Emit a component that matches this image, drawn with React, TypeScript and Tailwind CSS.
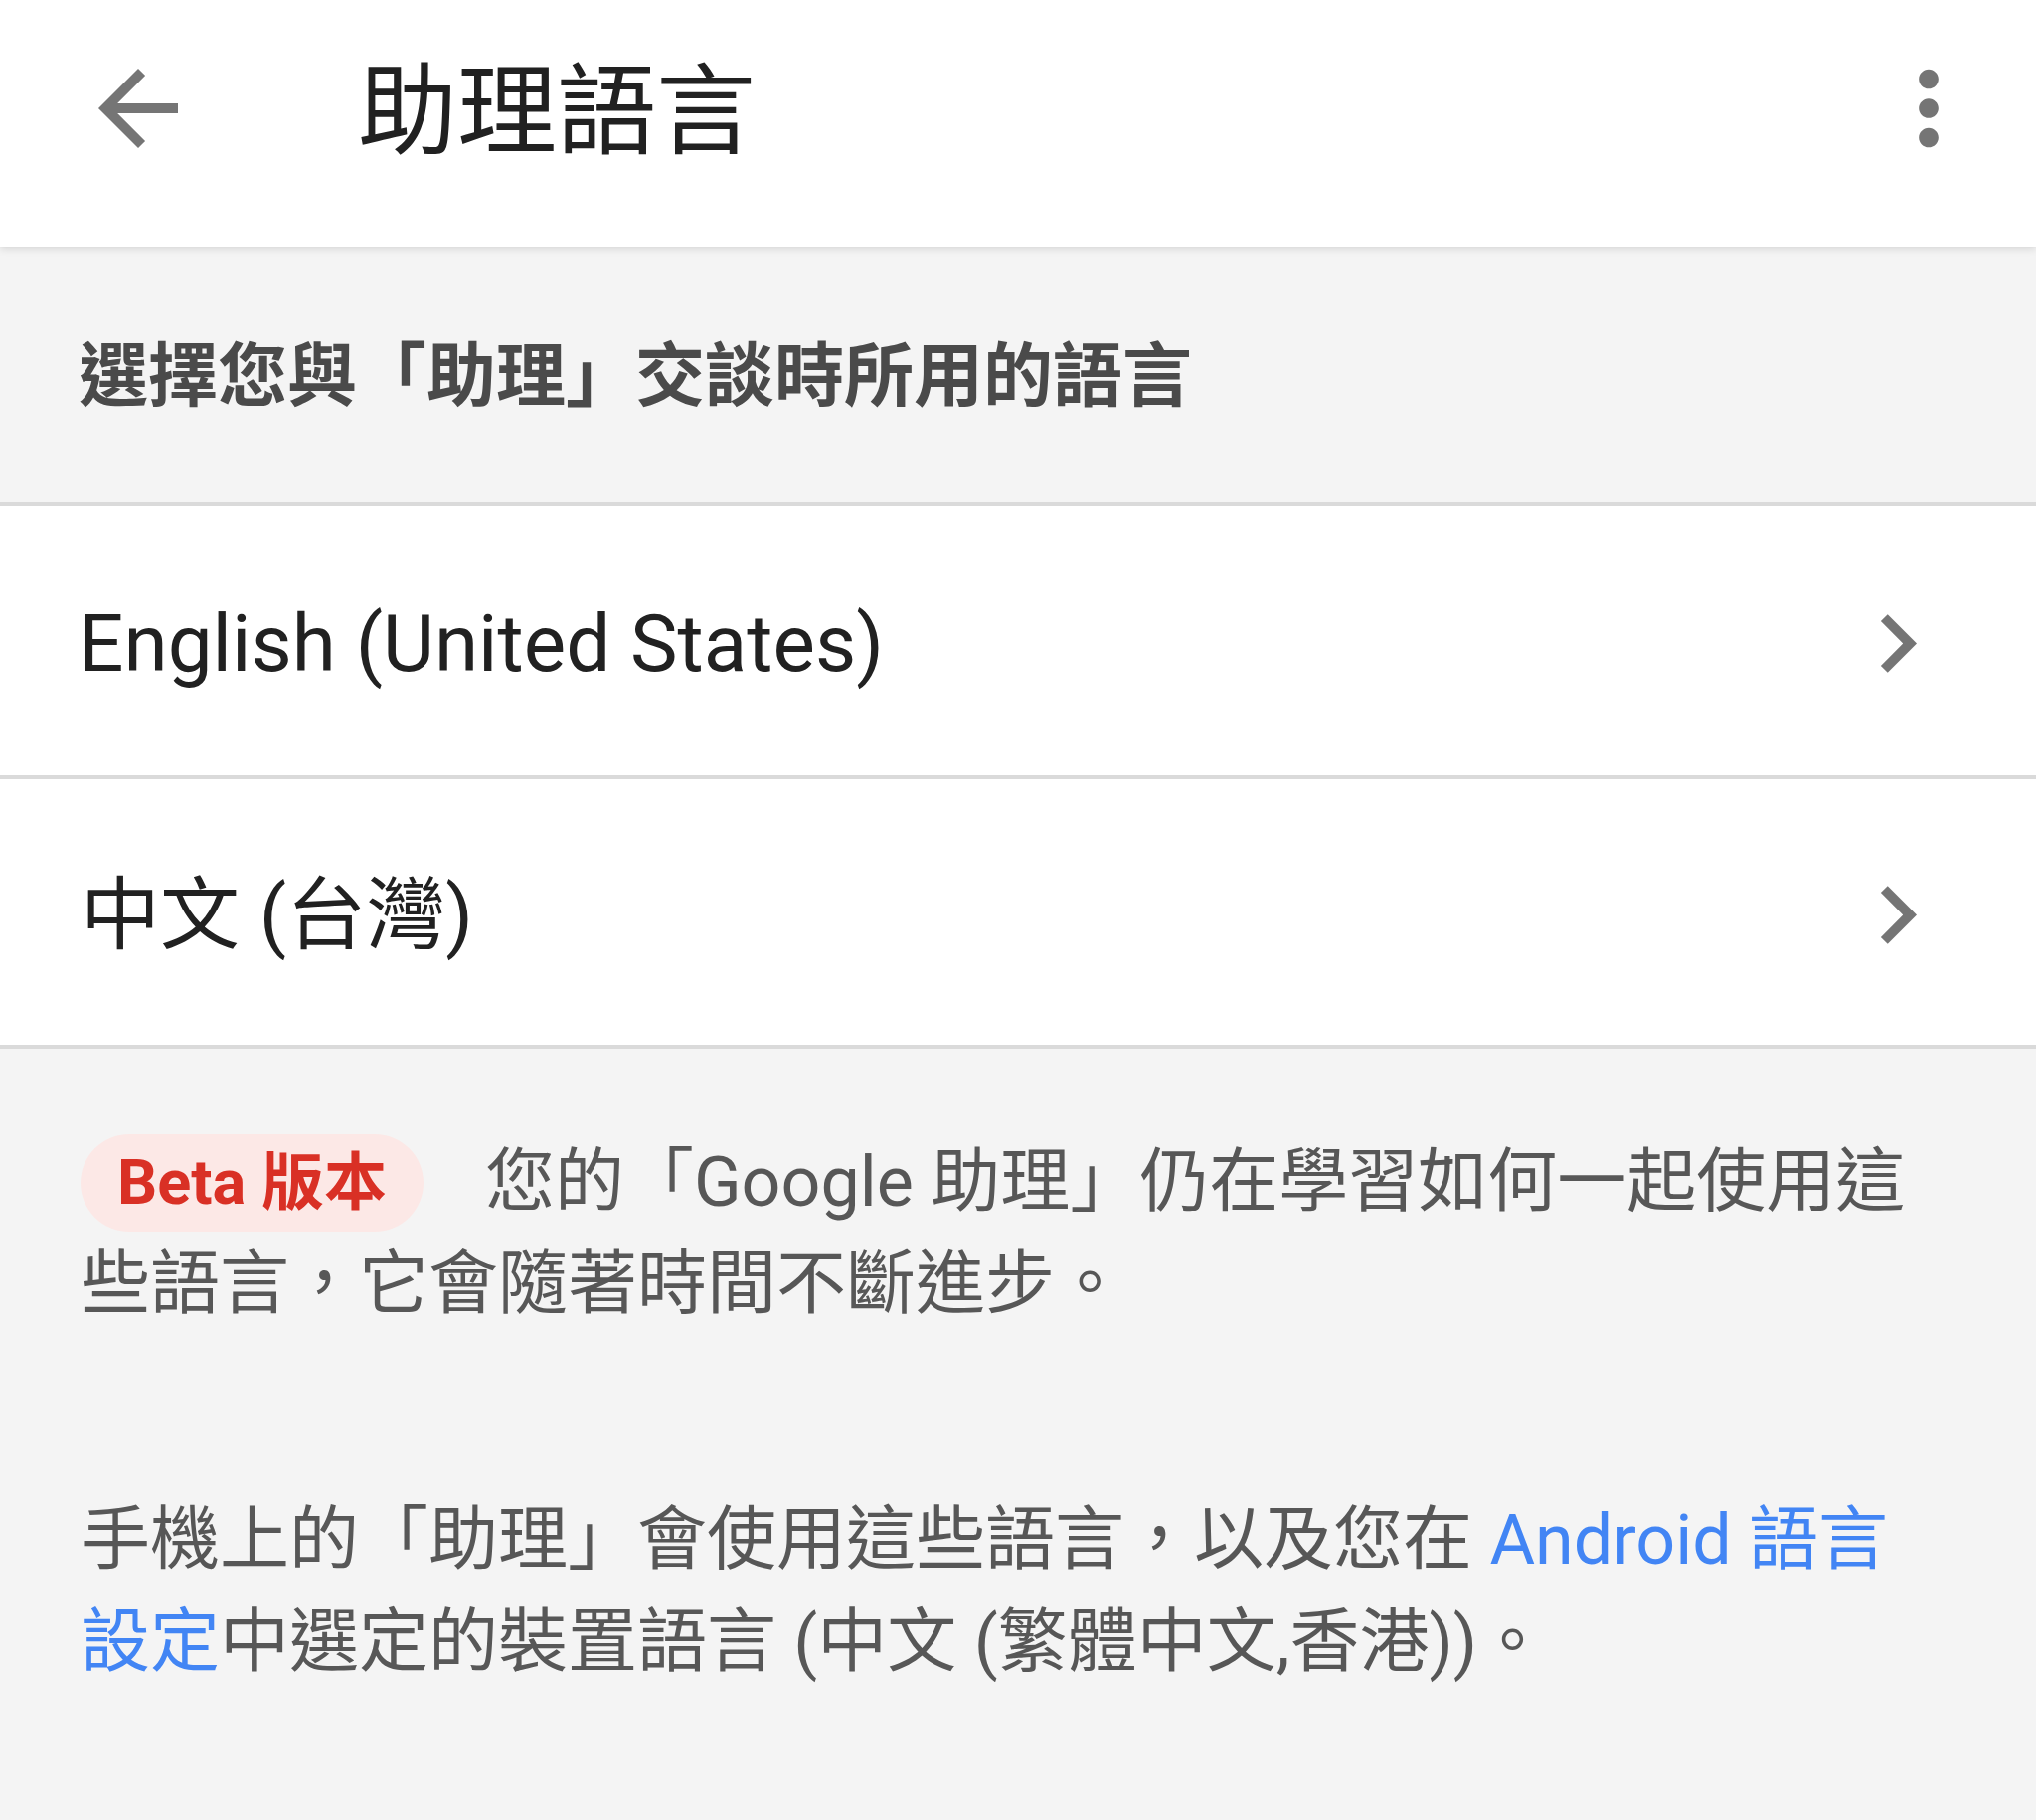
import React from "react";

const FONT = { fontFamily: "Roboto, 'Noto Sans CJK TC', sans-serif" };

function BackArrow() {
  return (
    <svg width="120" height="120" viewBox="0 0 24 24" fill="#757575">
      <path d="M20 11H7.83l5.59-5.59L12 4l-8 8 8 8 1.41-1.41L7.83 13H20v-2z" />
    </svg>
  );
}

function MoreVert() {
  return (
    <svg width="118" height="118" viewBox="0 0 24 24" fill="#757575">
      <path d="M12 8c1.1 0 2-.9 2-2s-.9-2-2-2-2 .9-2 2 .9 2 2 2zm0 2c-1.1 0-2 .9-2 2s.9 2 2 2 2-.9 2-2-.9-2-2-2zm0 6c-1.1 0-2 .9-2 2s.9 2 2 2 2-.9 2-2-.9-2-2-2z" />
    </svg>
  );
}

function Chevron() {
  return (
    <svg width="117" height="117" viewBox="0 0 24 24" fill="#757575">
      <path d="M10 6L8.59 7.41 13.17 12l-4.58 4.59L10 18l6-6z" />
    </svg>
  );
}

export default function App() {
  return (
    <div className="w-full min-h-[1831px] bg-[#f4f4f4]" style={FONT}>
      <header className="relative z-10 h-[248px] bg-white shadow-[0_3px_8px_rgba(0,0,0,0.12)]">
        <div className="flex h-[218px] items-center pl-[79px] pr-[49px]">
          <BackArrow />
          <h1 className="ml-[161px] pt-[8px] text-[100px] font-normal leading-none text-[#212121]">
            助理語言
          </h1>
          <div className="ml-auto">
            <MoreVert />
          </div>
        </div>
      </header>

      <div className="flex h-[257px] items-center pl-[79px] pt-[4px]">
        <span className="text-[70px] font-bold leading-[90px] text-[#4a4a4a]">
          選擇您與「助理」交談時所用的語言
        </span>
      </div>

      <div className="h-[4px] bg-[#dadada]" />

      <div className="flex h-[271px] items-center justify-between bg-white pl-[79px] pr-[81px] pt-[6px]">
        <span className="text-[80px] leading-[100px] text-[#212121]">English (United States)</span>
        <Chevron />
      </div>

      <div className="h-[4px] bg-[#dadada]" />

      <div className="flex h-[267px] items-center justify-between bg-white pl-[81px] pr-[81px] pt-[6px]">
        <span className="text-[80px] leading-[100px] text-[#212121]">中文 (台灣)</span>
        <Chevron />
      </div>

      <div className="h-[4px] bg-[#dadada]" />

      <div className="px-[81px] pt-[83px] pb-[120px] text-[70px] leading-[103px] text-[#575757]">
        <div>
          <div className="flex h-[103px] items-center">
            <span className="mr-[62px] flex h-[98px] shrink-0 items-center rounded-full bg-[#fce8e6] px-[37px] text-[63px] font-bold leading-none text-[#d93025]">
              Beta 版本
            </span>
            <span className="whitespace-nowrap">您的「Google 助理」仍在學習如何一起使用這</span>
          </div>
          <div className="whitespace-nowrap">些語言，它會隨著時間不斷進步。</div>
        </div>

        <div className="mt-[154px]">
          <div className="whitespace-nowrap">
            手機上的「助理」會使用這些語言，以及您在{" "}
            <span className="text-[#4285f4]">Android 語言</span>
          </div>
          <div className="whitespace-nowrap">
            <span className="text-[#4285f4]">設定</span>中選定的裝置語言 (中文 (繁體中文,香港))。
          </div>
        </div>
      </div>
    </div>
  );
}
